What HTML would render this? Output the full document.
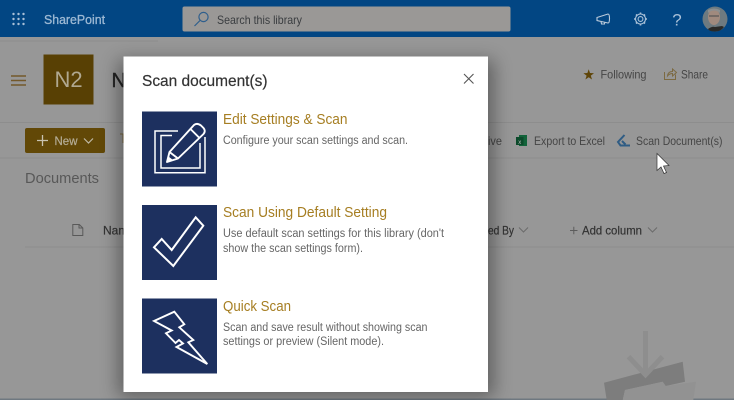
<!DOCTYPE html>
<html><head><meta charset="utf-8"><style>
html,body{margin:0;padding:0;width:734px;height:400px;overflow:hidden;background:#979797}
svg{display:block;filter:blur(.35px)}
text{font-family:"Liberation Sans",sans-serif}
</style></head><body>
<svg width="734" height="400" viewBox="0 0 734 400" xmlns="http://www.w3.org/2000/svg">
<defs><filter id="s" x="-20%" y="-20%" width="140%" height="140%"><feGaussianBlur stdDeviation="9"/></filter></defs>
<rect width="734" height="400" fill="#979797"/>
<rect y="398.5" width="734" height="1.5" fill="#6f7880"/>
<!-- header -->
<rect width="734" height="37" fill="#024683"/>
<g fill="#a9c0d8"><circle cx="13.5" cy="14" r="1.2"/><circle cx="18.5" cy="14" r="1.2"/><circle cx="23.5" cy="14" r="1.2"/><circle cx="13.5" cy="19" r="1.2"/><circle cx="18.5" cy="19" r="1.2"/><circle cx="23.5" cy="19" r="1.2"/><circle cx="13.5" cy="24" r="1.2"/><circle cx="18.5" cy="24" r="1.2"/><circle cx="23.5" cy="24" r="1.2"/></g>
<text x="44" y="24" font-size="12.5" fill="#9db9d4" stroke="#9db9d4" stroke-width=".3" textLength="61" lengthAdjust="spacingAndGlyphs">SharePoint</text>
<rect x="182.5" y="6.5" width="328" height="25" rx="2" fill="#9a9896"/>
<g fill="none" stroke="#2f5f8d" stroke-width="1.2"><circle cx="203.5" cy="17" r="4.6"/><path d="M200 20.5l-5.5 5.5"/></g>
<text x="217" y="24" font-size="12" fill="#3a3d40" textLength="85" lengthAdjust="spacingAndGlyphs">Search this library</text>
<path d="M597 17.5l11-3.500q1.500 0 1.500 4.500t-1.500 4.500l-11-2.500zM601 21.500l.5 2.500h3l.2-1.500" fill="none" stroke="#bccbdb" stroke-width="1.100"/>
<g fill="none" stroke="#a9c0d8" stroke-width="1.100"><circle cx="640.500" cy="19" r="2.400"/><circle cx="640.500" cy="19" r="5"/><path d="M640.500 12.500v1.500M640.500 24v1.500M634 19h1.500M645.500 19h1.500M636 14.500l1 1M644 22.500l1 1M636 23.500l1-1M644 15.500l1-1" stroke-width="1.600"/></g>
<text x="677" y="25.500" font-size="17" text-anchor="middle" fill="#a9c0d8">?</text>
<circle cx="715" cy="19" r="12.500" fill="#6d7a80"/>
<ellipse cx="714" cy="17" rx="6" ry="8" fill="#a08a7e"/>
<path d="M708 13q6-5 12 0v-3q-6-3-12 0z" fill="#8b8f90"/>
<path d="M709 16h10" stroke="#555" stroke-width="1.200"/>
<path d="M708 29q4-3 7-2l7-1 2 1q-3 4.500-9 4.500t-7-2.500z" fill="#2a2a28"/>
<!-- page top -->
<path d="M0 41h158" stroke="#8d8d8d" stroke-width="1"/>
<path d="M11 76h15M11 80.500h15M11 85h15" stroke="#73582a" stroke-width="1.400"/>
<rect x="43.500" y="54.500" width="50" height="50" fill="#584004"/>
<text x="68.500" y="87" font-size="22" text-anchor="middle" fill="#b0a890">N2</text>
<text x="111.500" y="87" font-size="20" fill="#232323" stroke="#232323" stroke-width=".4">N</text>
<polygon points="588.700,69.300 590,73 594,73.200 590.800,75.600 592,79.500 588.700,77.200 585.400,79.500 586.600,75.600 583.400,73.200 587.400,73" fill="#5f4508"/>
<text x="600.500" y="78.500" font-size="12" fill="#454545" textLength="46" lengthAdjust="spacingAndGlyphs">Following</text>
<path d="M664.500 72v7.500h11v-5M667.500 76q.5-4.500 5-4.500v-2.500l4 3.500-4 3.500v-2.500q-3 0-5 2.500z" fill="none" stroke="#7c6a42" stroke-width="1"/>
<text x="681" y="78.500" font-size="12" fill="#454545" textLength="27" lengthAdjust="spacingAndGlyphs">Share</text>
<!-- command bar -->
<path d="M0 122.500h734M0 158h734" stroke="#8d8d8d" stroke-width="1"/>
<rect x="25" y="128" width="80" height="25" rx="2" fill="#624807"/>
<path d="M37 140.500h11M42.500 135v11" stroke="#c8c2b0" stroke-width="1.300"/>
<text x="54.500" y="145" font-size="12" fill="#b5ad98" stroke="#b5ad98" stroke-width=".2" textLength="23" lengthAdjust="spacingAndGlyphs">New</text>
<path d="M84 138.500l4.500 4.500 4.500-4.500" fill="none" stroke="#c0b9a5" stroke-width="1.200"/>
<path d="M120 134h6M123 134v9" stroke="#7c6a42" stroke-width="1"/>
<text x="488" y="145" font-size="12" fill="#454545" textLength="14" lengthAdjust="spacingAndGlyphs">ive</text>
<rect x="519" y="135" width="8" height="11" fill="#12633a"/><rect x="516" y="137" width="7.500" height="8" fill="#0c4a2b"/>
<text x="519.800" y="144" font-size="6" fill="#bbb" text-anchor="middle">x</text>
<text x="534" y="145" font-size="12" fill="#454545" textLength="71" lengthAdjust="spacingAndGlyphs">Export to Excel</text>
<path d="M624.500 135l-6.500 7 2.500 3.500h9.500M622 141l3.500 3.500" fill="none" stroke="#2f5c84" stroke-width="2"/>
<text x="636" y="145" font-size="12" fill="#454545" textLength="86.500" lengthAdjust="spacingAndGlyphs">Scan Document(s)</text>
<text x="25" y="183" font-size="15" fill="#585858" textLength="74" lengthAdjust="spacingAndGlyphs">Documents</text>
<!-- list header -->
<path d="M72.800 224.500h6.500l3.500 3.500v7.500h-10zM79 224.500v3.500h3.800" fill="none" stroke="#595959" stroke-width="1"/>
<text x="103" y="234.500" font-size="12" fill="#333" stroke="#333" stroke-width=".2">Nam</text>
<text x="488" y="234.500" font-size="12" fill="#333" stroke="#333" stroke-width=".2" textLength="26" lengthAdjust="spacingAndGlyphs">ed By</text>
<path d="M519 227.500l4.500 4.500 4.500-4.500M648 227.500l4.500 4.500 4.500-4.500" fill="none" stroke="#6b6b6b" stroke-width="1"/>
<path d="M570 230.500h7.500M573.800 226.800v7.500" stroke="#5c5c5c" stroke-width="1"/>
<text x="582" y="234.500" font-size="12" fill="#333" stroke="#333" stroke-width=".2" textLength="60" lengthAdjust="spacingAndGlyphs">Add column</text>
<path d="M25 247h709" stroke="#8d8d8d" stroke-width="1"/>
<!-- empty state illustration -->
<polygon points="604,382.700 682.700,361.700 685,381.700 665.700,386 662.700,381.700 625,390 622.700,400 606.700,400" fill="#7d7d7d"/>
<polygon points="625,390 662.700,381.700 665.700,386 696,381.700 693.300,400 622.700,400" fill="#929292"/>
<path d="M645.500 331v43M628.500 356.700l17 18 17-18" fill="none" stroke="#8e8e8e" stroke-width="5"/>
<!-- modal -->
<rect x="118" y="60" width="376" height="337" fill="#000" opacity=".36" filter="url(#s)"/>
<rect x="123.500" y="56.500" width="364.500" height="335.500" fill="#fff"/>
<text x="142" y="86" font-size="16" fill="#333" stroke="#333" stroke-width=".2" textLength="125.500" lengthAdjust="spacingAndGlyphs">Scan document(s)</text>
<path d="M464 74l9.500 9.500M473.500 74l-9.500 9.500" stroke="#555" stroke-width="1.100"/>
<!-- tile 1 -->
<rect x="142" y="111.500" width="75" height="75" fill="#1d305f"/>
<g fill="none" stroke="#fff" stroke-width="1.500">
<path d="M178 131H155V172.700H205V137"/>
<path d="M172 135.500H161V168H200V143"/>
<path d="M167 162L169.500 152L194 125Q197 122.500 201 125.500L203.500 128Q206 131 203.500 134L178 158.500ZM190.500 129L199.500 138M169.500 152L178 158.500" stroke-width="1.900" stroke-linejoin="round"/>
</g>
<path d="M167 162l1.500-5.500 4.500 3.500z" fill="#fff"/>
<!-- tile 2 -->
<rect x="142" y="205" width="75" height="75" fill="#1d305f"/>
<polygon points="154,247.300 161.700,239 171.700,250 195.700,217.300 203.300,225.700 173.300,266" fill="none" stroke="#fff" stroke-width="2"/>
<!-- tile 3 -->
<rect x="142" y="298.500" width="75" height="75" fill="#1d305f"/>
<polygon points="154,321 174.300,311.700 184.300,324.300 179.300,327.300 193.300,340 188.300,342.300 207.300,364 176.500,347 183,343.500 179,340 175.500,343 166,333.300 171.700,330.500" fill="none" stroke="#fff" stroke-width="1.900"/>
<!-- tile text -->
<text x="223" y="124" font-size="14.500" fill="#a67e22" textLength="124.500" lengthAdjust="spacingAndGlyphs">Edit Settings &amp; Scan</text>
<text x="223" y="144" font-size="11.500" fill="#666" textLength="185" lengthAdjust="spacingAndGlyphs">Configure your scan settings and scan.</text>
<text x="223" y="217" font-size="14.500" fill="#a67e22" textLength="164" lengthAdjust="spacingAndGlyphs">Scan Using Default Setting</text>
<text x="223" y="237" font-size="11.500" fill="#666" textLength="221" lengthAdjust="spacingAndGlyphs">Use default scan settings for this library (don't</text>
<text x="223" y="252" font-size="11.500" fill="#666" textLength="140" lengthAdjust="spacingAndGlyphs">show the scan settings form).</text>
<text x="223" y="311" font-size="14.500" fill="#a67e22" textLength="68" lengthAdjust="spacingAndGlyphs">Quick Scan</text>
<text x="223" y="331" font-size="11.500" fill="#666" textLength="204.500" lengthAdjust="spacingAndGlyphs">Scan and save result without showing scan</text>
<text x="223" y="345" font-size="11.500" fill="#666" textLength="161" lengthAdjust="spacingAndGlyphs">settings or preview (Silent mode).</text>
<!-- cursor -->
<path d="M657 153.500v17l4-3.500 3 6.500 2.500-1-3-6.500 5.500-.5z" fill="#fff" stroke="#333" stroke-width=".7"/>
</svg>
</body></html>
